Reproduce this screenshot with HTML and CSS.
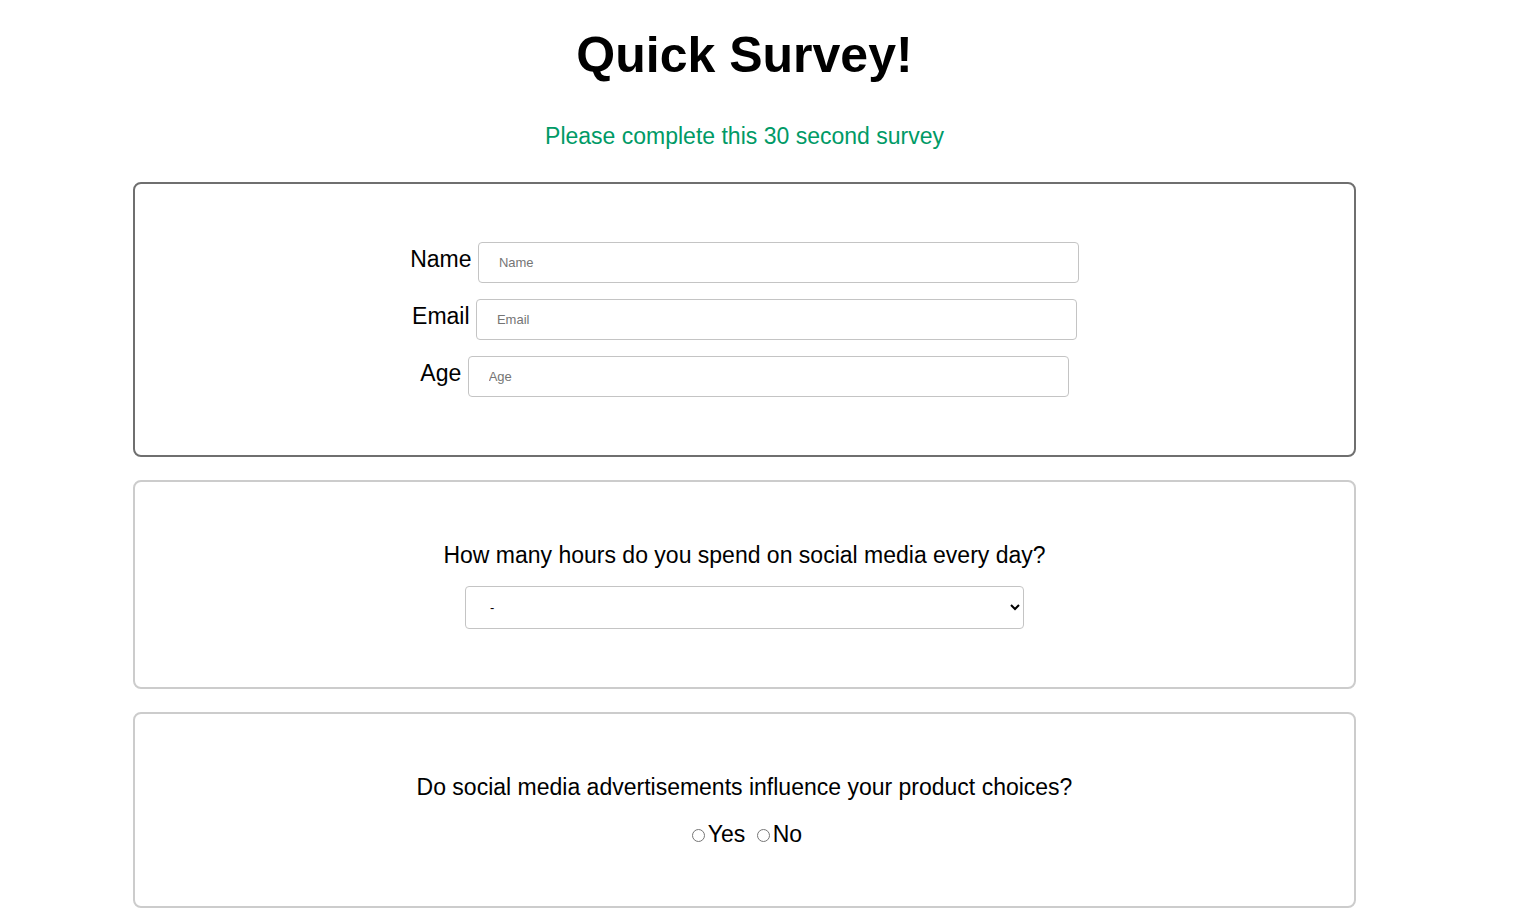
FILE: index.html
```html
<!DOCTYPE html>
<html lang="en">
<head>
<meta charset="utf-8">
<title>Quick Survey</title>
<link rel="stylesheet" href="styles.css">
</head>
<body>
<main class="page">
  <h1 class="title">Quick Survey!</h1>
  <p class="subtitle">Please complete this 30 second survey</p>
  <form class="survey">
    <section class="card card-main">
      <div class="row"><label class="label" for="name">Name</label> <input class="field" id="name" type="text" placeholder="Name"></div>
      <div class="row"><label class="label" for="email">Email</label> <input class="field" id="email" type="email" placeholder="Email"></div>
      <div class="row"><label class="label" for="age">Age</label> <input class="field" id="age" type="number" placeholder="Age"></div>
    </section>
    <section class="card">
      <p class="question">How many hours do you spend on social media every day?</p>
      <select class="dropdown">
        <option>-</option>
        <option>Less than 1</option>
        <option>1-3</option>
        <option>3-5</option>
        <option>More than 5</option>
      </select>
    </section>
    <section class="card card-radio">
      <p class="question">Do social media advertisements influence your product choices?</p>
      <div class="radios"><label class="choice"><input type="radio" name="ads" class="radio">Yes</label> <label class="choice"><input type="radio" name="ads" class="radio">No</label></div>
    </section>
  </form>
</main>
</body>
</html>
```
FILE: styles.css
```css
* { box-sizing: border-box; }
html, body { margin: 0; padding: 0; background: #fff; }
body {
  font-family: "Liberation Sans", Arial, sans-serif;
  color: #000;
}
.page {
  width: 1223px;
  margin-left: 133px;
  padding-bottom: 20px;
}
.title {
  margin: 26px 0 0;
  font-size: 50px;
  line-height: 58px;
  font-weight: 700;
  text-align: center;
}
.subtitle {
  margin: 39px 0 0;
  font-size: 23px;
  line-height: 26px;
  color: #009a66;
  text-align: center;
}
.survey {
  margin-top: 33px;
  display: flex;
  flex-direction: column;
  gap: 23px;
}
.card {
  border: 2px solid #cccccc;
  border-radius: 8px;
  text-align: center;
  padding: 60px 0 58px;
}
.card-main {
  border-color: #6f6f6f;
  padding: 58px 0 58px;
  display: flex;
  flex-direction: column;
  gap: 16px;
}
.row {
  display: flex;
  justify-content: center;
  align-items: baseline;
  gap: 6.4px;
}
.label {
  font-size: 23px;
}
.field {
  width: 601px;
  height: 41px;
  border: 1px solid #c4c4c4;
  border-radius: 4px;
  padding: 0 20px;
  font-family: "Liberation Sans", Arial, sans-serif;
  font-size: 13px;
}
.field::placeholder { color: #757575; }
.question {
  margin: 0;
  font-size: 23px;
  line-height: 26px;
}
.dropdown {
  display: block;
  margin: 18px auto 0;
  width: 559px;
  height: 43px;
  border: 1px solid #c4c4c4;
  border-radius: 4px;
  padding: 0 6px 0 20px;
  background: #fff;
  font-family: "Liberation Sans", Arial, sans-serif;
  font-size: 13px;
  color: #000;
}
.card-radio { padding: 60px 0 59px; }
.radios {
  margin-top: 21px;
  font-size: 23px;
  line-height: 26px;
}
.choice { display: inline-block; }
.radio {
  width: 13px;
  height: 13px;
  margin: 0 3px 0 5px;
}
```
